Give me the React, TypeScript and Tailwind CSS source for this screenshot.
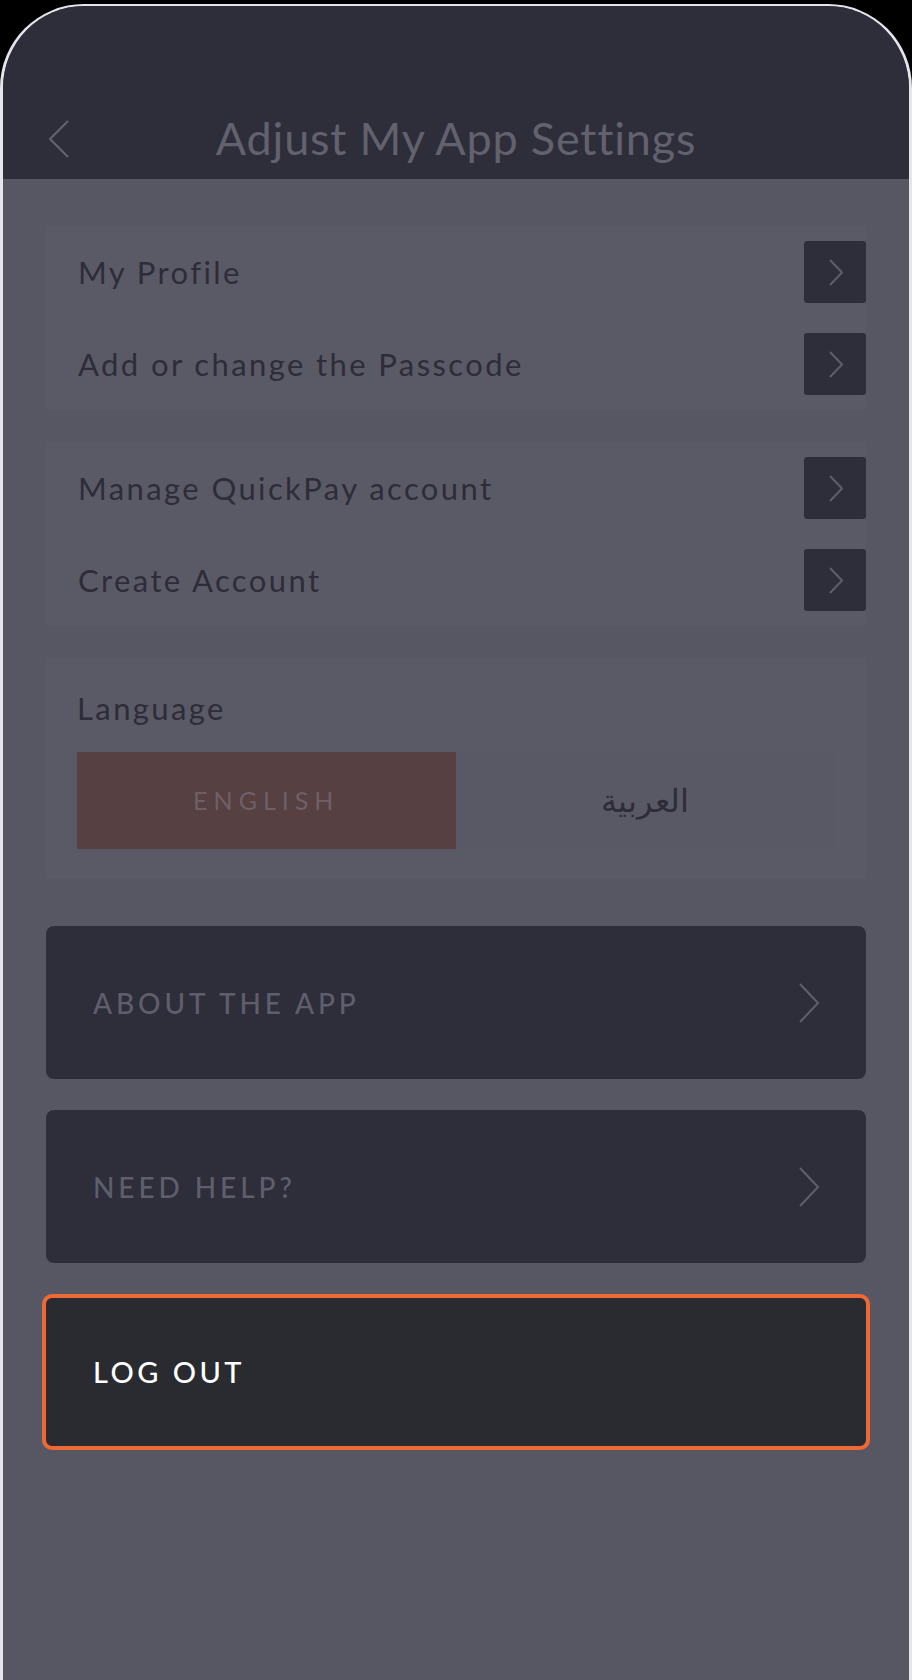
import type { CSSProperties } from 'react';

const font: CSSProperties = { fontFamily: 'Lato, "Noto Sans", sans-serif' };

function Row({ label }: { label: string }) {
  return (
    <div className="h-[92px] flex items-center justify-between pl-[32px]">
      <span className="text-[31px] text-[#2d2c38] tracking-[2.4px]">{label}</span>
      <div className="w-[62px] h-[62px] rounded-[3px] bg-[#2e2d3a] flex items-center justify-center">
        <svg width="16" height="27" viewBox="0 0 16 27" fill="none" className="ml-[2px]">
          <path d="M2 1 L14 13.5 L2 26" stroke="#5e5d6b" strokeWidth="2" strokeLinejoin="round" />
        </svg>
      </div>
    </div>
  );
}

function BigButton({ label }: { label: string }) {
  return (
    <div className="h-[153px] rounded-[8px] bg-[#2e2d3a] flex items-center justify-between pl-[47px] pr-[46px]">
      <span className="text-[28px] tracking-[0.14em] text-[#5f5e6c] font-medium">{label}</span>
      <svg width="22" height="40" viewBox="0 0 22 40" fill="none">
        <path d="M2 1 L20 20 L2 39" stroke="#5f5e6c" strokeWidth="2" strokeLinejoin="round" />
      </svg>
    </div>
  );
}

export default function App() {
  return (
    <div className="min-h-[1680px] bg-black pt-[4px]" style={font}>
      <div className="h-[1676px] rounded-t-[84px] border-x-[3px] border-t-2 border-[#e6e5ec] bg-[#575763] overflow-hidden flex flex-col">
        <header className="h-[173px] bg-[#2e2d3a] flex flex-col justify-end">
          <div className="h-[80px] relative flex items-center justify-center">
            <svg className="absolute left-[44px]" width="24" height="40" viewBox="0 0 24 40" fill="none">
              <path d="M21 2 L3 20 L21 38" stroke="#62616e" strokeWidth="2.2" strokeLinejoin="round" />
            </svg>
            <h1 className="text-[45px] text-[#62616e] tracking-[0.8px]">Adjust My App Settings</h1>
          </div>
        </header>

        <div className="px-[43px] flex flex-col">
          <div className="mt-[47px] bg-[#5a5a66]">
            <Row label="My Profile" />
            <Row label="Add or change the Passcode" />
          </div>

          <div className="mt-[32px] bg-[#5a5a66]">
            <Row label="Manage QuickPay account" />
            <Row label="Create Account" />
          </div>

          <div className="mt-[32px] bg-[#5a5a66] pt-[30px] pb-[30px] pl-[31px] pr-[32px]">
            <div className="h-[40px] flex items-center text-[31px] tracking-[2.4px] text-[#2d2c38]">Language</div>
            <div className="mt-[24px] grid grid-cols-2 h-[97px]">
              <div className="bg-[#564042] flex items-center justify-center text-[25px] tracking-[0.24em] text-[#6f5f66]">
                ENGLISH
              </div>
              <div className="bg-[#595965] flex items-center justify-center text-[32px] text-[#2d2c38]" style={{ fontFamily: '"DejaVu Serif", "Noto Sans", serif' }} dir="rtl">
                العربية
              </div>
            </div>
          </div>

          <div className="mt-[47px] flex flex-col gap-[31px]">
            <BigButton label="ABOUT THE APP" />
            <BigButton label="NEED HELP?" />
          </div>

          <div className="mt-[31px] -mx-[4px] h-[156px] rounded-[10px] border-[4px] border-[#ee6a35] bg-[#292b30] flex items-center pl-[47px]">
            <span className="text-[29px] tracking-[0.12em] text-white font-medium">LOG OUT</span>
          </div>
        </div>
      </div>
    </div>
  );
}
